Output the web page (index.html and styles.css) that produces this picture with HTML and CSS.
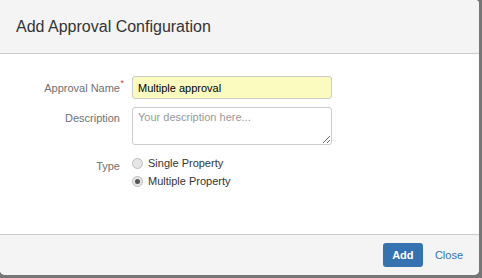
FILE: index.html
```html
<html>
<head>
    <title>Add Approval Configuration</title>
    <meta charset="UTF-8">
    <link rel="stylesheet" href="styles.css">
</head>
<body>

<div class="dialog">
    <div class="dialog-head">Add Approval Configuration</div>

    <div class="dialog-body">
        <div class="field">
            <label class="lbl req" for="aname">Approval Name</label>
            <input id="aname" class="txt filled" value="Multiple approval">
        </div>
        <div class="field top">
            <label class="lbl desc" for="adesc">Description</label>
            <textarea id="adesc" class="area" placeholder="Your description here..."></textarea>
        </div>
        <div class="field top">
            <span class="lbl type">Type</span>
            <div class="choices">
                <label class="choice"><input type="radio" name="t"> Single Property</label>
                <label class="choice"><input type="radio" name="t" checked> Multiple Property</label>
            </div>
        </div>
    </div>

    <div class="dialog-foot">
        <button class="btn-add">Add</button>
        <a class="btn-close" href="#">Close</a>
    </div>
</div>

<div class="behind">
    <span>Release</span>
    <span>Component</span>
    <span>Users</span>
    <span>Owner Rights</span>
    <span>User Rights</span>
</div>

</body>
</html>
```

FILE: styles.css
```css
body {
    margin:0;
    background:#767676;
    font-family:"Liberation Sans", Arial, sans-serif;
    font-size:11px;
    color:#333;
    overflow:hidden;
}
.dialog {
    width:479px;
    height:275px;
    background:#fff;
    border-radius:0 4px 5px 5px;
    display:flex;
    flex-direction:column;
    overflow:hidden;
}
.dialog-head {
    height:53px;
    line-height:53px;
    padding:0 16px;
    background:#f4f4f4;
    border-bottom:1px solid #ccc;
    font-size:16px;
    color:#333;
}
.dialog-body {
    flex:1;
    padding-top:22px;
    display:flex;
    flex-direction:column;
    gap:8px;
}
.field {
    display:flex;
    align-items:center;
    gap:12px;
}
.field.top {
    align-items:flex-start;
}
.lbl {
    width:120px;
    text-align:right;
    color:#707070;
    position:relative;
    line-height:16px;
}
.req::after {
    content:"*";
    color:#d04437;
    position:absolute;
    right:-4px;
    top:-5px;
    font-size:9px;
}
.lbl.desc {
    padding-top:3px;
}
.lbl.type {
    padding-top:3px;
    margin-top:2px;
}
.txt, .area {
    width:200px;
    box-sizing:border-box;
    border:1px solid #ccc;
    border-radius:3px;
    font-family:inherit;
    font-size:11px;
    margin:0;
}
.txt {
    height:23px;
    padding:0 5px;
    color:#000;
}
.filled {
    background:#fbfbc0;
}
.area {
    height:38px;
    padding:3px 5px;
    resize:both;
    color:#333;
}
.area::placeholder {
    color:#999;
}
.choices {
    display:flex;
    flex-direction:column;
    padding-top:1px;
}
.choice {
    height:18px;
    display:flex;
    align-items:center;
    gap:5px;
    color:#333;
}
.choice input {
    appearance:none;
    -webkit-appearance:none;
    width:11px;
    height:11px;
    margin:0;
    border:1px solid #bdbdbd;
    border-radius:50%;
    background:#e6e6e6;
    position:relative;
}
.choice input:checked::after {
    content:"";
    position:absolute;
    left:2px;
    top:2px;
    width:5px;
    height:5px;
    border-radius:50%;
    background:#555;
}
.dialog-foot {
    height:40px;
    background:#f4f4f4;
    border-top:1px solid #ccc;
    display:flex;
    align-items:center;
    justify-content:flex-end;
    gap:12px;
    padding-right:16px;
}
.btn-add {
    width:40px;
    height:24px;
    border:0;
    border-radius:3px;
    background:#3572b0;
    color:#fff;
    font-family:inherit;
    font-size:11px;
    font-weight:bold;
    padding:0;
}
.btn-close {
    color:#3572b0;
    text-decoration:none;
}
.behind {
    display:flex;
    padding-left:55px;
    margin-top:1px;
    color:#1a1a1a;
    font-size:11px;
    line-height:12px;
}
.behind span:nth-child(1) { width:92px; }
.behind span:nth-child(2) { width:93px; }
.behind span:nth-child(3) { width:91px; }
.behind span:nth-child(4) { width:90px; }
```
